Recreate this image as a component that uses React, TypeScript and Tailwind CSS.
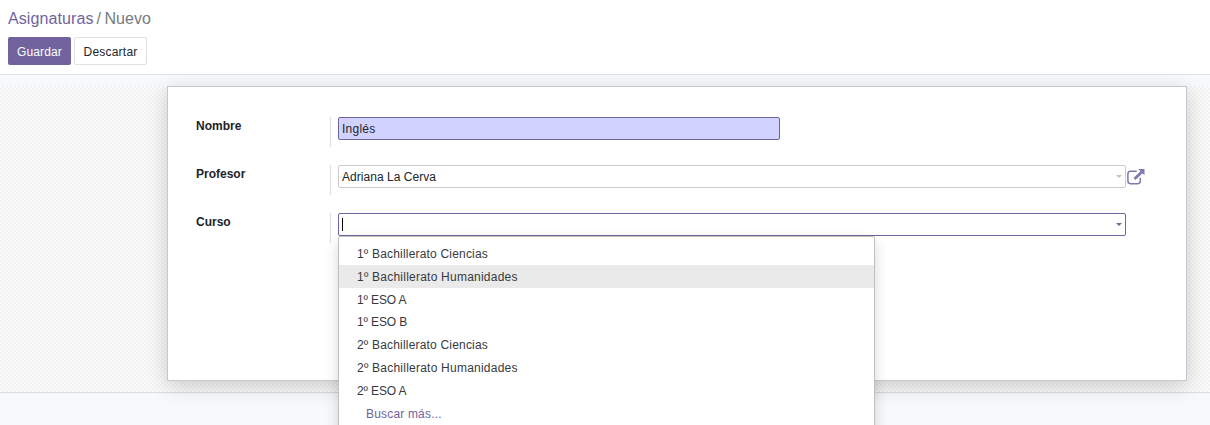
import type { ReactNode } from "react";

const options = [
  { name: "1º Bachillerato Ciencias", tracking: "tracking-[0.19px]" },
  { name: "1º Bachillerato Humanidades", tracking: "tracking-[0.23px]" },
  { name: "1º ESO A", tracking: "tracking-[-0.12px]" },
  { name: "1º ESO B", tracking: "tracking-[-0.12px]" },
  { name: "2º Bachillerato Ciencias", tracking: "tracking-[0.19px]" },
  { name: "2º Bachillerato Humanidades", tracking: "tracking-[0.23px]" },
  { name: "2º ESO A", tracking: "tracking-[-0.12px]" },
];

function Row({ label, children }: { label: string; children: ReactNode }) {
  return (
    <div className="flex h-[30px]">
      <div className="w-[135px] shrink-0 border-r border-[#ddd] pt-px font-bold leading-[17px] text-[#212529]">{label}</div>
      <div className="flex flex-1 items-start pl-[7px]">{children}</div>
    </div>
  );
}

function Caret({ className }: { className: string }) {
  return (
    <svg className={`ml-auto h-[3px] w-[6px] ${className}`} viewBox="0 0 6 3" fill="currentColor">
      <path d="M0 0h6L3 3z" />
    </svg>
  );
}

function ExternalLinkIcon() {
  return (
    <svg className="mt-[3px] ml-px h-[17px] w-[18px] text-[#7c7bad]" viewBox="0 0 18 17" fill="none">
      <path d="M9.8 3.2H3.4A2.6 2.6 0 0 0 .9 5.8v7.3a2.6 2.6 0 0 0 2.5 2.6h7.4a2.6 2.6 0 0 0 2.5-2.6V9.8" stroke="currentColor" strokeWidth="1.5" />
      <path d="M11.2 1h6.3v6.2l-2-2-7 6.9-2-2 7-6.9z" fill="currentColor" />
    </svg>
  );
}

export default function App() {
  return (
    <div className="h-[425px] overflow-hidden bg-[#f8f9fb] font-['Liberation_Sans',Arial,sans-serif] text-[12px] text-[#212529]">
      <header className="h-[75px] border-b border-[#dee2e6] bg-white px-2 pt-2">
        <nav className="flex h-[21px] items-center text-[16px] whitespace-pre">
          <span className="tracking-[0.1px] text-[#71639e]">Asignaturas</span>
          <span className="pl-[3px] text-[#777b80]">/</span>
          <span className="pl-[3.5px] text-[#777b80]">Nuevo</span>
        </nav>
        <div className="mt-2 flex gap-[3px]">
          <button className="h-7 w-[63px] rounded-[2px] bg-[#71639e] pt-px tracking-[0.12px] text-white">Guardar</button>
          <button className="h-7 w-[73px] rounded-[2px] border border-[#dee2e6] bg-white pt-[2px] tracking-[0.22px]">Descartar</button>
        </div>
      </header>

      <main className="mt-[11px] h-[307px] border-b border-[#ddd] bg-[repeating-conic-gradient(#f2f2f2_0%_25%,#fbfbfb_0%_50%)] bg-[length:4px_4px] pl-[167px]">
        <section className="flex h-[295px] w-[1020px] flex-col gap-[18px] border border-[#c8c8d3] bg-white pt-[30px] pl-7 shadow-[0_5px_20px_rgba(0,0,0,0.18)]">
          <Row label="Nombre">
            <div className="flex h-[23px] w-[442px] items-center rounded-[2px] border border-[#71639e] bg-[#d2d2ff] px-[3px] tracking-[0.25px]">Inglés</div>
          </Row>
          <Row label="Profesor">
            <div className="flex h-[23px] w-[788px] items-center rounded-[2px] border border-[#ccc] px-[3px]">
              <span className="tracking-[0.04px]">Adriana La Cerva</span>
              <Caret className="text-[#c4c4c4]" />
            </div>
            <ExternalLinkIcon />
          </Row>
          <Row label="Curso">
            <div className="relative flex h-[23px] w-[788px] items-center rounded-[2px] border border-[#71639e] px-[3px]">
              <span className="h-[13px] w-px bg-black" />
              <Caret className="text-[#71639e]" />
              <div className="absolute top-[22px] -left-px z-10 h-[210px] w-[537px] rounded-t-[2px] border border-[#c0c0c0] bg-white pt-[5.6px] shadow-[0_6px_14px_rgba(0,0,0,0.16)]">
                {options.map((option, index) => (
                  <div key={option.name} className={`flex h-[22.8px] items-center pl-[18px] text-[#373a3d] ${option.tracking} ${index === 1 ? "bg-[#eaeaea]" : ""}`}>
                    {option.name}
                  </div>
                ))}
                <div className="flex h-[22.8px] items-center pl-[27px] tracking-[0.18px] text-[#71639e]">Buscar más...</div>
              </div>
            </div>
          </Row>
        </section>
      </main>
    </div>
  );
}
